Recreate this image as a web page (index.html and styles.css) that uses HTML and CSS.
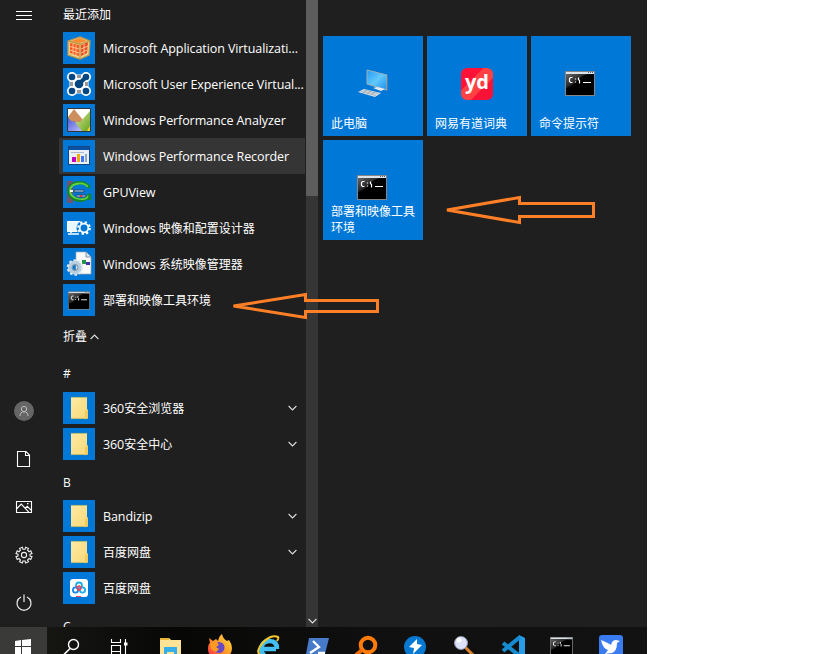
FILE: index.html
```html
<!DOCTYPE html>
<html lang="zh-CN">
<head>
<meta charset="utf-8">
<title>开始</title>
<link rel="stylesheet" href="styles.css">
</head>
<body>
<svg class="defs" aria-hidden="true">
  <defs>
    <linearGradient id="cmdShine" x1="0" y1="0" x2="1" y2="1"><stop offset="0" stop-color="#666"/><stop offset=".5" stop-color="#242424"/><stop offset=".56" stop-color="#000"/></linearGradient>
    <linearGradient id="folderFill" x2="1" y2="1"><stop stop-color="#ffeaa3"/><stop offset="1" stop-color="#f8d878"/></linearGradient>
    <linearGradient id="screenFill" x2="1" y2="1"><stop stop-color="#2299ee"/><stop offset=".5" stop-color="#62c8ff"/><stop offset="1" stop-color="#168fe8"/></linearGradient>
    <linearGradient id="peakGreen" x2="1" y2="1"><stop stop-color="#d3e49a"/><stop offset="1" stop-color="#69a51c"/></linearGradient>
    <linearGradient id="peakBlue" y2="1" x2="1"><stop stop-color="#4557d2"/><stop offset="1" stop-color="#c0bfff"/></linearGradient>
    <linearGradient id="foxFill" x1="1" y1="0" x2="0" y2="1"><stop stop-color="#ffe24a"/><stop offset=".5" stop-color="#ff9b24"/><stop offset="1" stop-color="#ff234e"/></linearGradient>
  </defs>
  <symbol id="cmd" viewBox="0 0 30 25">
    <path d="M0 0h30v25H0z" fill="#858585"/><path d="M1 1h28v2H1z" fill="#dce3e8"/><path d="M23 1h1v1h-1zm2 0h1v1h-1zm2 0h1v1h-1z" fill="#526078"/><path d="M1 3h28v21H1z" fill="#000"/><path d="M1 3h22Q13 6 9 14l-8 3z" fill="url(#cmdShine)"/>
    <path d="M7.500 6.500H5.500l-1 1v3l1 1H7.500m3-4v1m0 2v1m3-5v2l1 1v3M18 11.500h8" fill="none" stroke="#fff" stroke-width="1.200"/>
  </symbol>
  <symbol id="folder" viewBox="0 0 32 32">
    <path d="M8 5h16v12l1 1v8l-1 1H8z" fill="url(#folderFill)"/><path d="M8 5.400h16M8 26.600h16" stroke="#a0ad70" stroke-width=".8"/><path d="M23 18.500q0-1 1-1t1 1V26l-2 1H21l1-1v-6z" fill="#f1cb5e"/>
  </symbol>
  <symbol id="chevron" viewBox="0 0 9 6"><path d="M.6 1 4.500 4.900 8.400 1" fill="none" stroke="#ddd" stroke-width="1.100"/></symbol>
</svg>

<div class="desktop">
  <main class="start">
    <nav class="rail">
      <svg class="rail-icon" viewBox="0 0 20 20"><path d="M2 6.500h16M2 10.500h16M2 14.500h16" stroke="#fff"/></svg>
      <span class="spacer"></span>
      <svg class="rail-icon" viewBox="0 0 20 20"><circle cx="10" cy="10" r="10" fill="#666"/><circle cx="10" cy="8" r="2.700" fill="none" stroke="#bbb"/><path d="M6 15q0-4.200 4-4.200t4 4.200" fill="none" stroke="#bbb"/></svg>
      <svg class="rail-icon" viewBox="0 0 20 20"><path d="M3.500 2.500h8.500l3.500 3.500v11.500h-12zM11.500 2.500v4h4" fill="none" stroke="#fff" stroke-width="1.100"/></svg>
      <svg class="rail-icon" viewBox="0 0 20 20"><path d="M2.500 4.500h15v11h-15zM2.500 12l4.700-5 7.800 8.300m-3.800-4 2-2 4.300 4.200" fill="none" stroke="#fff" stroke-width="1.100"/><path d="M13 6h1.500v1.300H13z" fill="#fff"/></svg>
      <svg class="rail-icon" viewBox="0 0 20 20"><path d="m8.400 2.200.5 2 2.200 0 .5-2 2.900 1.200-1 1.800 1.500 1.500 1.800-1 1.200 2.900-2 .5v2l2 .5-1.200 2.900-1.800-1-1.500 1.500 1 1.800-2.900 1.200-.5-2H8.900l-.5 2-2.900-1.200 1-1.800L5 13.500l-1.800 1L2 11.600l2-.5v-2L2 8.600l1.200-2.900 1.800 1L6.500 5.200l-1-1.800z" fill="none" stroke="#eee" stroke-width="1.100"/><circle cx="10" cy="10" r="2.600" fill="none" stroke="#eee" stroke-width="1.100"/></svg>
      <svg class="rail-icon" viewBox="0 0 20 20"><path d="M7 4a7 7 0 1 0 6 0M10 1.500v7.500" fill="none" stroke="#eee" stroke-width="1.200"/></svg>
    </nav>

    <section class="apps">
      <div class="heading first">最近添加</div>
      <div class="app"><svg class="app-icon" viewBox="0 0 32 32"><path d="m5 9 12-4 10 4-1 14-9 4-12-4z" fill="#e8cf8b"/><path d="m7 11 9 2v11l-9-3z" fill="#ff5823"/><path d="m18 13 7-3-1 11-6 3z" fill="#e94a22"/><path d="m8 9 9-3 7 3-8 2z" fill="#ff8b30"/><path d="M7 14.500l9 2.500m-9 1 9 3M10 12v10m3-9v10m5-6 7-3m-7 7 6-3m-3-7v11" stroke="#ffc18e" stroke-width="1"/><path d="m5 9 12 3 10-3M17 12v15M5 9l12-4 10 4-1 14-9 4-12-4z" fill="none" stroke="#bd9a4c" stroke-width="1.300"/></svg><span class="name">Microsoft Application Virtualizati...</span></div>
      <div class="app"><svg class="app-icon" viewBox="0 0 32 32"><path d="M9 9h14v14H9z" fill="none" stroke="#fff" stroke-width="5"/><g fill="#fff"><circle cx="9" cy="9" r="5"/><circle cx="23" cy="9" r="5"/><circle cx="9" cy="23" r="5"/><circle cx="23" cy="23" r="5"/></g><path d="M8.500 14v4m15-4v4M14 8.500h4m-4 15h4" stroke="#999" stroke-width="3"/><path d="M11 11h10v10H11z" fill="#fff"/><g fill="#064782"><circle cx="9" cy="9" r="3.300"/><circle cx="23" cy="9" r="3.300"/><circle cx="9" cy="23" r="3.300"/><circle cx="23" cy="23" r="3.300"/><circle cx="16" cy="16" r="4.300"/></g><path d="m17 15 5-5" stroke="#064782" stroke-width="4"/></svg><span class="name">Microsoft User Experience Virtual...</span></div>
      <div class="app"><svg class="app-icon" viewBox="0 0 32 32"><path d="M4.500 4.500h23v23h-23z" fill="#fff"/><path d="m5 13 6-8 9 11v11H5z" fill="#cd8e5d"/><path d="m13 18 4 0 10-11v20H13z" fill="url(#peakGreen)"/><path d="M5 13q2 5 6 4l8 10H5z" fill="url(#peakBlue)"/><path d="m24 27 3-5v5z" fill="#efdb32"/><path d="M4.500 4.500h23v23h-23z" fill="none" stroke="#333"/></svg><span class="name">Windows Performance Analyzer</span></div>
      <div class="app selected"><svg class="app-icon" viewBox="0 0 32 32"><path d="M5 6h22v19H5z" fill="#174582"/><path d="M6 10h20v14H6z" fill="#eaf0f8"/><path d="M6 7h20v3H6z" fill="#0852a7"/><path d="M8 12h13v1H8z" fill="#aabbd0"/><path d="M9 17h4v5H9z" fill="#c100c6"/><path d="M14 14h3v8h-3z" fill="#f5a900"/><path d="M18 16h3v6h-3z" fill="#3f78f0"/><path d="M22 14h2v8h-2z" fill="#8ea7c1"/></svg><span class="name">Windows Performance Recorder</span></div>
      <div class="app"><svg class="app-icon" viewBox="0 0 32 32"><path d="M4 5h6v22H4z" fill="#6c5570"/><path d="M5 5v22m3-22v22" stroke="#a3445c" stroke-dasharray="1 1"/><path d="M26.500 12C23 4 6 5 6 15s17 13 20.500 3v6" fill="none" stroke="#16852f" stroke-width="3.500"/><path d="M25 11C20 5 7 7 7 15s15 11 18 5" fill="none" stroke="#63d53c" stroke-width="1.800"/><path d="M11 14h10v2H11zm2 5h10v2H13z" fill="#b9dafa" stroke="#22466d"/><path d="M7 14h3v2H7z" fill="#fff"/><path d="M17 19h2v2h-2z" fill="#e5322e"/></svg><span class="name">GPUView</span></div>
      <div class="app"><svg class="app-icon" viewBox="0 0 32 32"><path d="M4.500 9.500h19v10h-19z" fill="#e9f7ff" stroke="#fff"/><path d="M5 22h11M8 21v-2" stroke="#fff" stroke-width="1.500"/><circle cx="21" cy="16" r="7.500" fill="#0078d7"/><circle cx="21" cy="16" r="4.300" fill="none" stroke="#fff" stroke-width="1.700"/><circle cx="21" cy="16" r="5.900" fill="none" stroke="#fff" stroke-width="2" stroke-dasharray="2.300 2.330"/></svg><span class="name">Windows <span class="zh">映像和配置设计器</span></span></div>
      <div class="app"><svg class="app-icon" viewBox="0 0 32 32"><path d="M13 4h10l5 5v17H13z" fill="#fafafa" stroke="#aaa" stroke-width=".7"/><path d="M23 4v5h5" fill="#d8e0e8" stroke="#8799aa"/><path d="M19 12h4v4h-4z" fill="#24914d"/><path d="M23 14h4v3h-4z" fill="#432fb5"/><circle cx="12" cy="19.500" r="4.800" fill="none" stroke="#b8cddd" stroke-width="4.600"/><circle cx="12" cy="19.500" r="7.200" fill="none" stroke="#dce8f0" stroke-width="2" stroke-dasharray="2.600 2"/><circle cx="12" cy="19.500" r="3" fill="none" stroke="#7390a7"/></svg><span class="name">Windows <span class="zh">系统映像管理器</span></span></div>
      <div class="app"><span class="app-icon"><svg class="cmd-small"><use href="#cmd"/></svg></span><span class="name zh">部署和映像工具环境</span></div>
      <div class="heading collapse">折叠<svg class="up"><use href="#chevron"/></svg></div>
      <div class="heading">#</div>
      <div class="app"><svg class="app-icon"><use href="#folder"/></svg><span class="name">360<span class="zh">安全浏览器</span></span><svg class="chevron"><use href="#chevron"/></svg></div>
      <div class="app"><svg class="app-icon"><use href="#folder"/></svg><span class="name">360<span class="zh">安全中心</span></span><svg class="chevron"><use href="#chevron"/></svg></div>
      <div class="heading letter">B</div>
      <div class="app"><svg class="app-icon"><use href="#folder"/></svg><span class="name">Bandizip</span><svg class="chevron"><use href="#chevron"/></svg></div>
      <div class="app"><svg class="app-icon"><use href="#folder"/></svg><span class="name zh">百度网盘</span><svg class="chevron"><use href="#chevron"/></svg></div>
      <div class="app"><svg class="app-icon" viewBox="0 0 32 32"><rect x="7" y="7" width="18" height="18" rx="3" fill="#fff"/><g fill="none" stroke-width="1.800"><circle cx="16" cy="13.500" r="3" stroke="#1dafe9"/><circle cx="12.500" cy="18" r="2.600" stroke="#1689ec"/><circle cx="19.500" cy="18" r="2.600" stroke="#1dafe9"/><path d="m13.500 15.500 2.500-1.500 2.500 1.500m-4.500 1 2 1.500 2-1.500" stroke="#f5415c"/></g><path d="M13 24h5v1h-5z" fill="#f5415c"/></svg><span class="name zh">百度网盘</span></div>
      <div class="heading last">C</div>
    </section>

    <div class="scrollbar"><span class="thumb"></span><svg class="scroll-down"><use href="#chevron"/></svg></div>

    <section class="tiles">
      <div class="tile"><svg class="tile-icon" viewBox="0 0 32 32"><path d="m10 2 20 5v15l-20-6z" fill="url(#screenFill)" stroke="#9cb1be" stroke-width="1"/><path d="m30 7 1 .5V23l-1-.5z" fill="#637c8c"/><path d="m16 20 4-1 8 2-4 2z" fill="#e7edf1"/><path d="m1 24 6-3 17 4-6 4z" fill="#d9dfe3"/><path d="m4 23.500 15 4m-12-5.500 14 3.500m-15-1 4-2m0 3 4-2m0 3 4-2" stroke="#8797a2" stroke-width=".6"/></svg><span>此电脑</span></div>
      <div class="tile"><span class="tile-icon youdao">yd</span><span>网易有道词典</span></div>
      <div class="tile"><svg class="tile-icon cmd-large"><use href="#cmd"/></svg><span>命令提示符</span></div>
      <div class="tile"><svg class="tile-icon cmd-large"><use href="#cmd"/></svg><span>部署和映像工具环境</span></div>
    </section>
  </main>

  <footer class="taskbar">
    <div class="task active"><svg viewBox="0 0 32 27"><path d="m7 14 6-1v6H7zm7-1 9-1v7h-9zM7 20h6v7H7zm7 0h9v7h-9z" fill="#fff"/></svg></div>
    <div class="task"><svg viewBox="0 0 32 27"><circle cx="17.500" cy="17.500" r="5" fill="none" stroke="#fff" stroke-width="1.400"/><path d="m14 21.500-7 7" stroke="#fff" stroke-width="1.600"/></svg></div>
    <div class="task"><svg viewBox="0 0 32 27"><path d="M7.500 12v3.500h9V12M7.500 27v-8.500h9V27M7.500 24.500h9M21.500 12v15" transform="translate(-1 0)" fill="none" stroke="#fff" stroke-width="1.100"/><path d="M19 15.500h3.500v3H19z" fill="#fff"/></svg></div>
    <div class="task"><svg viewBox="0 0 32 27"><path d="M6 11h9l2 2h10v14H6z" fill="#ffe397"/><path d="M6 11h9v2H6z" fill="#e9b534"/><path d="M10 20h13v7h-3v-2h-7v2h-3z" fill="#35aeea"/></svg></div>
    <div class="task"><svg viewBox="0 0 32 27"><path d="m6 11 4 3 3-2 2 2q1-5 4-7 1 5 5 7l2-1q3 4 3 8 0 10-12 10T5 22q0-5 2-6z" fill="url(#foxFill)"/><circle cx="16" cy="20.500" r="5.500" fill="#6948c5"/><path d="m7 16 7-1 2 3-3 2 3 2-3 3-5-3z" fill="#ff9a21"/></svg></div>
    <div class="task"><svg viewBox="0 0 32 27"><path d="M24 22H9q1-8 8.500-8T25 22M9 21q0 6 4 7" fill="none" stroke="#43bff3" stroke-width="4.500"/><path d="M8 27C1 25 16 5 26 10q1 1-1 4" fill="none" stroke="#f8c52a" stroke-width="2"/></svg></div>
    <div class="task"><svg viewBox="0 0 32 27"><path d="M8 11h20l-4 16H5z" fill="#477ac8"/><path d="m12 14 6 6-9 6m8 0h7" fill="none" stroke="#fff" stroke-width="2.300"/></svg></div>
    <div class="task"><svg viewBox="0 0 32 27"><circle cx="18" cy="18" r="7.300" fill="none" stroke="#ff7b08" stroke-width="4"/><path d="m12 23-6 5" stroke="#f06a05" stroke-width="4"/></svg></div>
    <div class="task"><svg viewBox="0 0 32 27"><circle cx="16" cy="20" r="11" fill="#0879d2"/><path d="m18 12-8 8 5 1-1 6 9-9-5-1z" fill="#fff"/></svg></div>
    <div class="task"><svg viewBox="0 0 32 27"><path d="m17 20 9 9" stroke="#d8822c" stroke-width="3"/><circle cx="13" cy="16" r="6.500" fill="#dce3fa" stroke="#8991aa"/><circle cx="11" cy="13" r="2.500" fill="#fff"/></svg></div>
    <div class="task"><svg viewBox="0 0 32 27"><path d="m22 8 6 3v16h-6z" fill="#279de8"/><path d="M23 10 6 24m0-8 17 13" stroke="#168bd2" stroke-width="4"/></svg></div>
    <div class="task"><svg class="task-cmd"><use href="#cmd"/></svg></div>
    <div class="task"><svg viewBox="0 0 32 27"><path d="M4 27V11q0-3 3-3h18q3 0 3 3v16z" fill="#397bf0"/><path d="M6 13q9 4 10 5 1-5 5-5l4 1-3 2q0 8-5 10l-7 1 3-4q-5-1-7-10z" fill="#fff"/></svg></div>
  </footer>

  <svg class="arrow arrow-list" viewBox="0 0 150 27"><path d="M2.500 14 74.500 2.500V8.500H146.500V19.500H74.500V25.500Z"/></svg>
  <svg class="arrow arrow-tile" viewBox="0 0 152 28"><path d="M2 14 74.500 1.500V7.500H148.500V20.500H74.500V26.500Z"/></svg>
</div>
</body>
</html>
```

FILE: styles.css
```css
* { box-sizing: border-box; }
body { margin: 0; overflow: hidden; background: #fff; color: #fff; font: 12px/16px "Open Sans", "Noto Sans CJK SC", sans-serif; }
.defs { position: absolute; width: 0; height: 0; }
.desktop { position: relative; width: 647px; height: 654px; overflow: hidden; }
.start { display: flex; height: 627px; background: #1f1f1f; }
.rail { display: flex; flex-direction: column; align-items: center; width: 48px; padding: 5px 0 14px; gap: 28px; }
.rail-icon { width: 20px; height: 20px; flex: none; }
.spacer { flex: 1; }
.apps { width: 258px; height: 627px; padding-left: 11px; padding-right: 1px; overflow: hidden; }
.heading { display: flex; align-items: center; height: 36px; padding: 3px 0 0 4px; }
.heading.first { height: 30px; padding-top: 0; }
.heading.collapse { padding-top: 2px; gap: 3px; }
.heading.letter { padding-top: 5px; }
.heading.last { padding-top: 6px; }
.up { width: 9px; height: 6px; transform: rotate(180deg); }
.app { display: flex; align-items: center; height: 36px; padding: 0 8px 0 4px; }
.selected { background: #353535; }
.app-icon { width: 32px; height: 32px; flex: none; background: #0078d7; display: flex; align-items: center; justify-content: center; }
.cmd-small { width: 22px; height: 19px; }
.name { margin-left: 8px; padding-top: 2px; font-size: 12.5px; letter-spacing: -0.09px; white-space: nowrap; }
.zh, .name.zh { font-size: 12px; letter-spacing: 0; }
.chevron { width: 9px; height: 6px; margin-left: auto; }
.scrollbar { display: flex; flex-direction: column; align-items: center; justify-content: space-between; width: 12px; background: #353535; padding-bottom: 3px; }
.thumb { width: 12px; height: 196px; background: #5d5d5d; }
.scroll-down { width: 9px; height: 6px; }
.tiles { display: grid; grid-template-columns: repeat(3, 100px); grid-auto-rows: 100px; gap: 4px; padding: 36px 0 0 5px; }
.tile { display: flex; flex-direction: column; justify-content: space-between; align-items: center; padding: 32px 8px 4px; background: #0078d7; }
.tile > span:last-child { align-self: stretch; }
.tile-icon { width: 32px; height: 32px; flex: none; }
.cmd-large { width: 30px; height: 25px; margin: 3px 2px 3px 0; }
.youdao { border-radius: 6px; background: linear-gradient(135deg, #ff1236 35%, #ff4144 36%, #ff4144 65%, #f81238 66%); text-align: center; font: bold 20px/28px "Open Sans", sans-serif; }
.taskbar { display: flex; height: 27px; background: linear-gradient(90deg, #1b1c18, #070806 27%, #101010 60%, #121212); }
.task { display: flex; justify-content: center; width: 49px; flex: none; }
.task.active { width: 47px; background: #3a3b39; }
.task svg { width: 32px; height: 27px; flex: none; }
.task .task-cmd { width: 23px; height: 19px; margin-top: 10px; }
.arrow { position: absolute; overflow: visible; fill: none; stroke: #ff7f27; stroke-width: 3; stroke-miterlimit: 2; }
.arrow-list { left: 231px; top: 292px; width: 150px; height: 27px; }
.arrow-tile { left: 445px; top: 196px; width: 152px; height: 28px; }
```
